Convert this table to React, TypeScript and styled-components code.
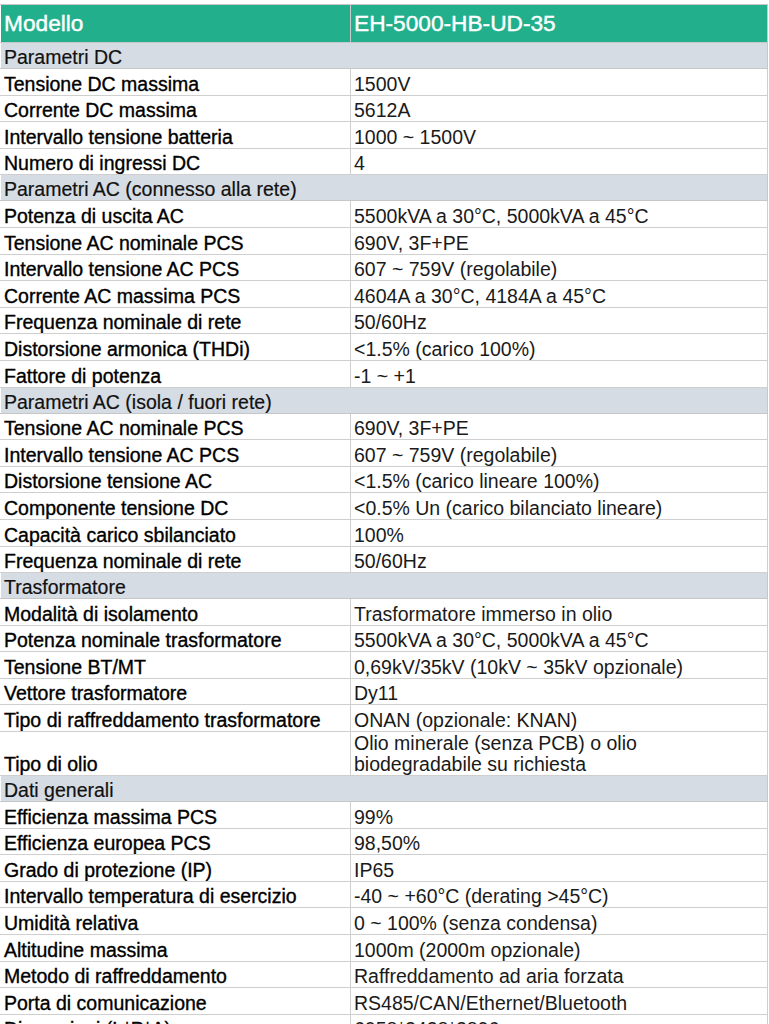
import React from "react";
import styled, { createGlobalStyle } from "styled-components";

const GlobalStyle = createGlobalStyle`
  html, body {
    margin: 0;
    padding: 0;
    background: #ffffff;
  }
  body {
    font-family: "Liberation Sans", Arial, sans-serif;
  }
`;

const Page = styled.div`
  padding-top: 4px;
  width: 769px;
  overflow: hidden;
`;

const SpecTable = styled.table`
  width: 768px;
  border-collapse: collapse;
  table-layout: fixed;
  font-family: "Liberation Sans", Arial, sans-serif;
  font-size: 19.5px;
  line-height: 21px;
  color: #111;
`;

const HeadRow = styled.tr`
  height: 38px;
  background: #22b08c;
`;

const HeadCell = styled.th`
  padding: 0 3px;
  text-align: left;
  vertical-align: middle;
  font-weight: normal;
  font-size: 22.7px;
  color: #ffffff;
  -webkit-text-stroke: 0.4px #ffffff;
  border: 1px solid #c9c9c9;
  border-left-color: transparent;
  white-space: nowrap;
`;

const SectionRow = styled.tr`
  height: 26px;
  background: #d6dce4;
`;

const SectionCell = styled.td`
  padding: 0 3px 0;
  vertical-align: bottom;
  color: #111;
  -webkit-text-stroke: 0.2px #111;
  border: 1px solid #c6c6c6;
  border-left-color: transparent;
`;

const DataRow = styled.tr`
  height: 26.6px;
  background: #ffffff;
`;

const Cell = styled.td<{ $label?: boolean }>`
  padding: 1px 3px 0;
  vertical-align: bottom;
  color: ${(p) => (p.$label ? "#000" : "#1a1a1a")};
  -webkit-text-stroke: ${(p) => (p.$label ? "0.35px #000" : "0")};
  border: 1px solid #cfcfcf;
  border-left-color: ${(p) => (p.$label ? "transparent" : "#cfcfcf")};
  overflow: hidden;
`;

type Section = {
  title: string;
  rows: [string, string][];
};

const sections: Section[] = [
  {
    title: "Parametri DC",
    rows: [
      ["Tensione DC massima", "1500V"],
      ["Corrente DC massima", "5612A"],
      ["Intervallo tensione batteria", "1000 ~ 1500V"],
      ["Numero di ingressi DC", "4"],
    ],
  },
  {
    title: "Parametri AC (connesso alla rete)",
    rows: [
      ["Potenza di uscita AC", "5500kVA a 30°C, 5000kVA a 45°C"],
      ["Tensione AC nominale PCS", "690V, 3F+PE"],
      ["Intervallo tensione AC PCS", "607 ~ 759V (regolabile)"],
      ["Corrente AC massima PCS", "4604A a 30°C, 4184A a 45°C"],
      ["Frequenza nominale di rete", "50/60Hz"],
      ["Distorsione armonica (THDi)", "<1.5% (carico 100%)"],
      ["Fattore di potenza", "-1 ~ +1"],
    ],
  },
  {
    title: "Parametri AC (isola / fuori rete)",
    rows: [
      ["Tensione AC nominale PCS", "690V, 3F+PE"],
      ["Intervallo tensione AC PCS", "607 ~ 759V (regolabile)"],
      ["Distorsione tensione AC", "<1.5% (carico lineare 100%)"],
      ["Componente tensione DC", "<0.5% Un (carico bilanciato lineare)"],
      ["Capacità carico sbilanciato", "100%"],
      ["Frequenza nominale di rete", "50/60Hz"],
    ],
  },
  {
    title: "Trasformatore",
    rows: [
      ["Modalità di isolamento", "Trasformatore immerso in olio"],
      ["Potenza nominale trasformatore", "5500kVA a 30°C, 5000kVA a 45°C"],
      ["Tensione BT/MT", "0,69kV/35kV (10kV ~ 35kV opzionale)"],
      ["Vettore trasformatore", "Dy11"],
      ["Tipo di raffreddamento trasformatore", "ONAN (opzionale: KNAN)"],
      ["Tipo di olio", "Olio minerale (senza PCB) o olio biodegradabile su richiesta"],
    ],
  },
  {
    title: "Dati generali",
    rows: [
      ["Efficienza massima PCS", "99%"],
      ["Efficienza europea PCS", "98,50%"],
      ["Grado di protezione (IP)", "IP65"],
      ["Intervallo temperatura di esercizio", "-40 ~ +60°C (derating >45°C)"],
      ["Umidità relativa", "0 ~ 100% (senza condensa)"],
      ["Altitudine massima", "1000m (2000m opzionale)"],
      ["Metodo di raffreddamento", "Raffreddamento ad aria forzata"],
      ["Porta di comunicazione", "RS485/CAN/Ethernet/Bluetooth"],
      ["Dimensioni (L*P*A)", "6058*2438*2896"],
    ],
  },
];

export default function App() {
  return (
    <Page>
      <GlobalStyle />
      <SpecTable>
        <colgroup>
          <col style={{ width: 350 }} />
          <col />
        </colgroup>
        <thead>
          <HeadRow>
            <HeadCell>Modello</HeadCell>
            <HeadCell>EH-5000-HB-UD-35</HeadCell>
          </HeadRow>
        </thead>
        <tbody>
          {sections.map((section) => (
            <React.Fragment key={section.title}>
              <SectionRow>
                <SectionCell colSpan={2}>{section.title}</SectionCell>
              </SectionRow>
              {section.rows.map(([label, value]) => (
                <DataRow key={section.title + label}>
                  <Cell $label>{label}</Cell>
                  <Cell>{value}</Cell>
                </DataRow>
              ))}
            </React.Fragment>
          ))}
        </tbody>
      </SpecTable>
    </Page>
  );
}
